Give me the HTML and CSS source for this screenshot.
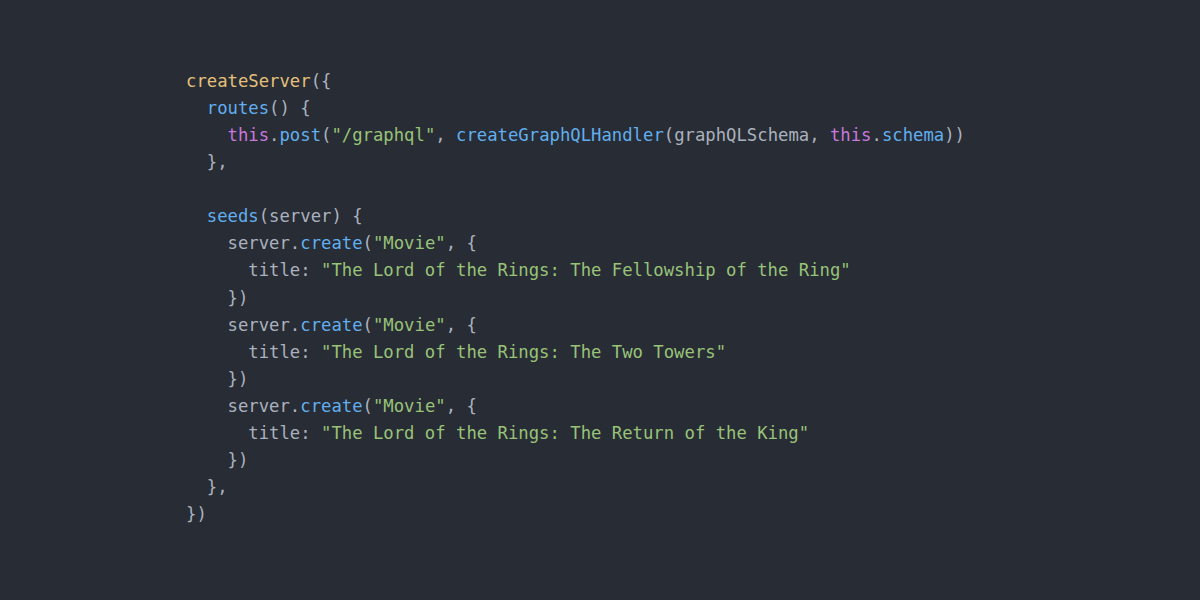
FILE: index.html
```html
<!DOCTYPE html>
<html>
<head>
<meta charset="utf-8">
<link rel="stylesheet" href="styles.css">
</head>
<body>
<main class="page">
<pre class="code"><span class="y">createServer</span>({
  <span class="b">routes</span>() {
    <span class="p">this</span>.<span class="b">post</span>(<span class="g">"/graphql"</span>, <span class="b">createGraphQLHandler</span>(graphQLSchema, <span class="p">this</span>.<span class="b">schema</span>))
  },

  <span class="b">seeds</span>(server) {
    server.<span class="b">create</span>(<span class="g">"Movie"</span>, {
      title: <span class="g">"The Lord of the Rings: The Fellowship of the Ring"</span>
    })
    server.<span class="b">create</span>(<span class="g">"Movie"</span>, {
      title: <span class="g">"The Lord of the Rings: The Two Towers"</span>
    })
    server.<span class="b">create</span>(<span class="g">"Movie"</span>, {
      title: <span class="g">"The Lord of the Rings: The Return of the King"</span>
    })
  },
})</pre>
</main>
</body>
</html>
```

FILE: styles.css
```css
html, body {
  margin: 0;
  padding: 0;
  background: #282c34;
}
.page {
  width: 1200px;
  height: 600px;
  box-sizing: border-box;
  padding: 68px 0 0 186px;
}
.code {
  margin: 0;
  font-family: "DejaVu Sans Mono", monospace;
  font-size: 17.25px;
  line-height: 27.07px;
  color: #abb2bf;
}
.y { color: #e5c07b; }
.b { color: #61afef; }
.p { color: #c678dd; }
.g { color: #98c379; }
```
